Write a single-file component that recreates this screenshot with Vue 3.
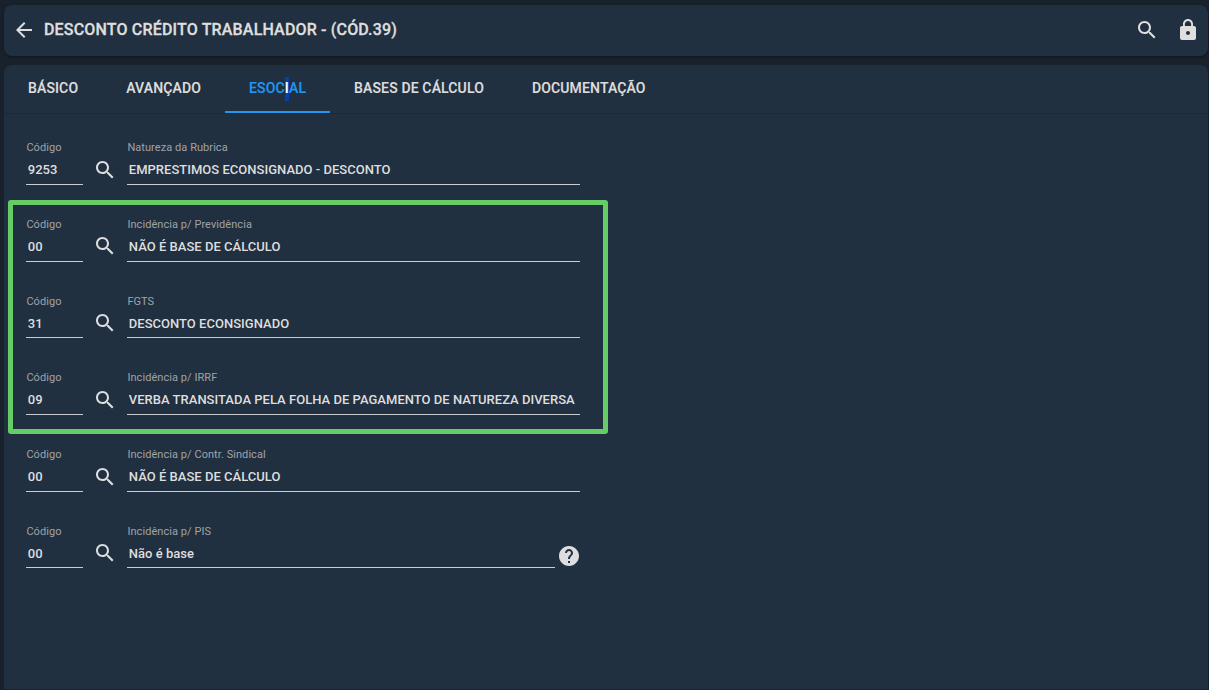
<script setup>
import { ref } from 'vue'

const tabs = ['BÁSICO', 'AVANÇADO', 'ESOCIAL', 'BASES DE CÁLCULO', 'DOCUMENTAÇÃO']
const activeTab = ref('ESOCIAL')

const fields = [
  { code: '9253', label: 'Natureza da Rubrica', value: 'EMPRESTIMOS ECONSIGNADO - DESCONTO' },
  { code: '00', label: 'Incidência p/ Previdência', value: 'NÃO É BASE DE CÁLCULO' },
  { code: '31', label: 'FGTS', value: 'DESCONTO ECONSIGNADO' },
  {
    code: '09',
    label: 'Incidência p/ IRRF',
    value: 'VERBA TRANSITADA PELA FOLHA DE PAGAMENTO DE NATUREZA DIVERSA'
  },
  { code: '00', label: 'Incidência p/ Contr. Sindical', value: 'NÃO É BASE DE CÁLCULO' },
  { code: '00', label: 'Incidência p/ PIS', value: 'Não é base', help: true }
]

const searchPath =
  'M15.5 14h-.79l-.28-.27C15.41 12.59 16 11.11 16 9.5 16 5.91 13.09 3 9.5 3S3 5.91 3 9.5 5.91 16 9.5 16c1.61 0 3.09-.59 4.23-1.57l.27.28v.79l5 4.99L20.49 19l-4.99-5zm-6 0C7.01 14 5 11.99 5 9.5S7.01 5 9.5 5 14 7.01 14 9.5 11.99 14 9.5 14z'
</script>

<template>
  <div class="page">
    <header class="toolbar">
      <svg class="icon" viewBox="0 0 24 24">
        <path d="M20 11H7.83l5.59-5.59L12 4l-8 8 8 8 1.41-1.41L7.83 13H20v-2z" />
      </svg>
      <h1>DESCONTO CRÉDITO TRABALHADOR - (CÓD.39)</h1>
      <svg class="icon" viewBox="0 0 24 24"><path :d="searchPath" /></svg>
      <svg class="icon lock" viewBox="0 0 24 24">
        <path
          d="M18 8h-1V6c0-2.76-2.24-5-5-5S7 3.24 7 6v2H6c-1.1 0-2 .9-2 2v10c0 1.1.9 2 2 2h12c1.1 0 2-.9 2-2V10c0-1.1-.9-2-2-2zm-6 9c-1.1 0-2-.9-2-2s.9-2 2-2 2 .9 2 2-.9 2-2 2zm3.1-9H8.9V6c0-1.71 1.39-3.1 3.1-3.1 1.71 0 3.1 1.39 3.1 3.1v2z"
        />
      </svg>
    </header>

    <main class="panel">
      <nav class="tabs">
        <div
          v-for="tab in tabs"
          :key="tab"
          class="tab"
          :class="{ active: tab === activeTab }"
          @click="activeTab = tab"
        >
          <span v-if="tab === 'ESOCIAL'">ESOC<span class="selected">I</span>AL</span>
          <span v-else>{{ tab }}</span>
        </div>
      </nav>

      <div class="form">
        <div v-for="field in fields" :key="field.label" class="row">
          <div class="field code">
            <label>Código</label>
            <div class="value">{{ field.code }}</div>
          </div>
          <svg class="icon search" viewBox="0 0 24 24"><path :d="searchPath" /></svg>
          <div class="field description">
            <label>{{ field.label }}</label>
            <div class="value">{{ field.value }}</div>
          </div>
          <svg v-if="field.help" class="icon help" viewBox="0 0 24 24">
            <path
              d="M12 2C6.48 2 2 6.48 2 12s4.48 10 10 10 10-4.48 10-10S17.52 2 12 2zm1 17h-2v-2h2v2zm2.07-7.75l-.9.92C13.45 12.9 13 13.5 13 15h-2v-.5c0-1.1.45-2.1 1.17-2.83l1.24-1.26c.37-.36.59-.86.59-1.41 0-1.1-.9-2-2-2s-2 .9-2 2H8c0-2.21 1.79-4 4-4s4 1.79 4 4c0 .88-.36 1.68-.93 2.25z"
            />
          </svg>
        </div>
        <div class="highlight"></div>
      </div>
    </main>
  </div>
</template>

<style>
body {
  margin: 0;
  background: #19222c;
}
</style>

<style scoped>
.page {
  box-sizing: border-box;
  height: 690px;
  padding: 5px 1px 1px 4px;
  display: flex;
  flex-direction: column;
  gap: 9px;
  overflow: hidden;
  background: #19222c;
  color: #dedede;
  font-family: Roboto, sans-serif;
}

.toolbar {
  box-sizing: border-box;
  height: 51px;
  padding: 0 8px 1px;
  display: flex;
  align-items: center;
  border-radius: 8px;
  background: #213040;
  box-shadow: 0 1px 3px rgba(0, 0, 0, 0.45);
}

h1 {
  flex: 1;
  margin: 0 0 0 8px;
  font-size: 16px;
  font-weight: 500;
  line-height: 24px;
  letter-spacing: 0.17px;
  -webkit-text-stroke: 0.3px;
}

.icon {
  flex: none;
  width: 24px;
  height: 24px;
  fill: #dedede;
}

.lock {
  margin-left: 17px;
}

.panel {
  flex: 1;
  border-radius: 8px 8px 0 0;
  background: #213040;
}

.tabs {
  display: flex;
  height: 48px;
  border-bottom: 1px solid #1d2937;
}

.tab {
  box-sizing: border-box;
  padding: 0 24px;
  border-bottom: 2px solid transparent;
  font-size: 14px;
  font-weight: 500;
  line-height: 47px;
  letter-spacing: 0.14px;
  -webkit-text-stroke: 0.15px;
}

.tab.active {
  border-color: #2196f3;
  color: #2196f3;
}

.selected {
  padding: 3px 0 5px;
  background: #0540b0;
  color: #fff;
}

.form {
  position: relative;
  padding: 23.9px 0 0 22px;
}

.row {
  display: flex;
  height: 76.72px;
  align-items: flex-start;
}

.field {
  box-sizing: border-box;
  height: 47px;
  padding-top: 1.4px;
  border-bottom: 1px solid #c9ccd0;
}

.code {
  width: 57px;
}

.description {
  width: 453px;
}

.row:has(.help) .description {
  width: 428px;
}

label {
  display: block;
  padding-left: 0.4px;
  color: #a0a3a7;
  font-size: 11px;
  line-height: 18px;
  letter-spacing: 0.06px;
}

.value {
  padding: 3px 0 0 1.8px;
  font-size: 13px;
  font-weight: 500;
  line-height: 20px;
  letter-spacing: 0.02px;
  white-space: nowrap;
}

.search {
  margin: 19.85px 10px 0;
}

.help {
  margin: 22.65px 0 0 2px;
}

/* frame drawn over the three incidence rows */
.highlight {
  position: absolute;
  top: 86px;
  left: 4px;
  box-sizing: border-box;
  width: 600px;
  height: 234px;
  border: 5px solid #66cc66;
  border-radius: 3px;
}
</style>
